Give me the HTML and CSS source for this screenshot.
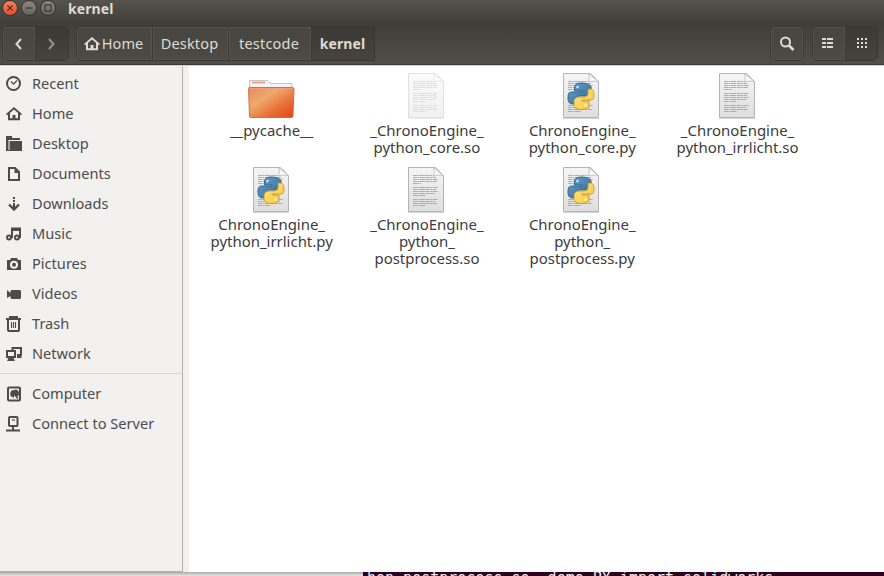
FILE: index.html
```html
<!DOCTYPE html>
<html lang="en">
<head>
<meta charset="utf-8">
<title>kernel</title>
<link rel="stylesheet" href="styles.css">
</head>
<body>
<svg class="defs" aria-hidden="true">
  <defs>
    <linearGradient id="folder" x1="0" y1="0" x2="1" y2="1"><stop offset="0" stop-color="#e58a58"/><stop offset=".35" stop-color="#efaa6c"/><stop offset=".65" stop-color="#e8743b"/><stop offset="1" stop-color="#e2430f"/></linearGradient>
    <linearGradient id="paper" x1="0" y1="0" x2="0" y2="1"><stop offset="0" stop-color="#f5f5f5"/><stop offset="1" stop-color="#dedede"/></linearGradient>
    <linearGradient id="blue" x1="0" y1="0" x2="1" y2="1"><stop offset="0" stop-color="#6ba3cf"/><stop offset="1" stop-color="#2f6795"/></linearGradient>
    <linearGradient id="yellow" x1="0" y1="0" x2="1" y2="1"><stop offset="0" stop-color="#ffe477"/><stop offset="1" stop-color="#f5c947"/></linearGradient>
  </defs>
  <symbol id="home" viewBox="0 0 16 16"><path d="M0 8 8 1l8 7-1.2 1.2L8 3.6 1.2 9.2z" fill="currentColor" stroke="none"/><path d="M3 7v6.2h10V7" fill="none" stroke="currentColor" stroke-width="2"/><path d="M6.500 9h3v5h-3z" fill="currentColor" stroke="none"/></symbol>
  <symbol id="doc" viewBox="0 0 48 48">
    <path d="M6.500 1.500h27l8 8v36h-35z" fill="url(#paper)" stroke="#b4b4b4"/>
    <path d="M6 46.500h36" stroke="#bbb" opacity=".6"/>
    <path d="M11 9.500h20M11 11.500h23M11 13.500h25M11 15.500h24M11 17.500h8M11 21.500h25M11 23.500h23M11 25.500h25M11 27.500h22M11 29.500h13M11 33.500h25M11 35.500h22M11 37.500h24M11 39.500h13" stroke="#a6a6a6" stroke-width=".9" stroke-dasharray="4 .5 2 .5 5 .6"/>
    <path d="M31.500 1.500c1 3 1 5 0 8.500 4-1 7-1 10-.5z" fill="#fafafa" stroke="#b5b5b5" stroke-width=".8"/>
  </symbol>
  <symbol id="python" viewBox="0 0 48 48">
    <use href="#doc"/>
    <path d="M24 11c-5 0-6.500 2-6.500 5v3H25v1H14.500C11.500 20 11 23 11 26c0 4 1.500 6 4.500 6H18v-3c0-3 2-5 5-5h6c3 0 5-2 5-4v-4c0-3-3-5-10-5z" fill="url(#blue)" stroke="#2c5f87" stroke-width=".9"/>
    <path d="M25 37.500c6 0 8-2 8-5V29h-7v-1h9c3 0 3-3 3-5 0-4-1-6-4-6h-2v4c0 3-2 4-5 4h-4c-3 0-5 2-5 4v4c0 3 3 4.500 7 4.500z" transform="translate(-1)" fill="url(#yellow)" stroke="#c99524" stroke-width=".9"/>
    <circle cx="20.500" cy="15" r="1.200" fill="#dceaf5"/><circle cx="28.500" cy="33.500" r="1.200" fill="#fff6cf"/>
  </symbol>
</svg>
<div class="window">
  <header class="titlebar">
    <span class="control close"><svg viewBox="0 0 16 16"><path d="m5 5 6 6m0-6-6 6"/></svg></span>
    <span class="control"><svg viewBox="0 0 16 16"><path d="M4 8h8"/></svg></span>
    <span class="control"><svg viewBox="0 0 16 16"><path d="M4.500 4.500h7v7h-7z"/></svg></span>
    <h1 class="title">kernel</h1>
  </header>
  <nav class="toolbar">
    <div class="group history">
      <button class="button"><svg viewBox="0 0 16 16"><path d="m10 3-4.500 5 4.500 5"/></svg></button>
      <button class="button pressed muted"><svg viewBox="0 0 16 16"><path d="m5 3 4.500 5L5 13"/></svg></button>
    </div>
    <div class="group path">
      <button class="button crumb-home"><svg><use href="#home"/></svg><span>Home</span></button>
      <button class="button crumb-desktop">Desktop</button>
      <button class="button crumb-testcode">testcode</button>
      <button class="button pressed current">kernel</button>
    </div>
    <div class="group search"><button class="button"><svg viewBox="0 0 16 16"><circle cx="6.500" cy="6" r="4.500"/><path d="m10 9.500 4.500 4.500" stroke-width="2.500"/></svg></button></div>
    <div class="group views">
      <button class="button"><svg class="solid" viewBox="0 0 16 16"><path d="M1 2h4v2H1zm5 0h6v2H6zM1 6h4v2H1zm5 0h6v2H6zM1 10h4v2H1zm5 0h6v2H6z"/></svg></button>
      <button class="button pressed"><svg class="solid" viewBox="0 0 16 16"><path d="M4 2h2v2H4zm4 0h2v2H8zm4 0h2v2h-2zM4 6h2v2H4zm4 0h2v2H8zm4 0h2v2h-2zM4 10h2v2H4zm4 0h2v2H8zm4 0h2v2h-2z"/></svg></button>
    </div>
  </nav>
  <div class="content">
    <aside class="sidebar">
      <ul class="places">
        <li><svg viewBox="0 0 16 16"><circle cx="7.500" cy="7.500" r="6.500"/><path d="m5 5.500 2.500 2.500L11 4.500" stroke-width="1.300"/></svg>Recent</li>
        <li><svg><use href="#home"/></svg>Home</li>
        <li><svg class="solid" viewBox="0 0 16 16"><path d="M0 0h6v2h8v2H2.500v10H0zM3.500 5H16v10H0v-1h3.500z"/></svg>Desktop</li>
        <li><svg viewBox="0 0 16 16"><path d="M3 2h6l4 4v8H3z"/><path d="M8.500 2v5H13z" fill="currentColor" stroke="none"/></svg>Documents</li>
        <li><svg viewBox="0 0 16 16"><path d="M8 1v8" stroke-dasharray="2 1"/><path d="m3 8.500 5 5 5-5M8 9v4" stroke-width="2.300"/></svg>Downloads</li>
        <li><svg viewBox="0 0 16 16"><circle cx="3" cy="11.500" r="2"/><circle cx="11" cy="11.500" r="2"/><path d="M6 12V2.500h8V12M6 4h8"/></svg>Music</li>
        <li><svg class="solid" viewBox="0 0 16 16"><path fill-rule="evenodd" d="M1 4h3l1-2h6l1 2h3v10H1zm7 .7a4 4 0 1 0 0 8 4 4 0 0 0 0-8zm0 2a2 2 0 1 1 0 4 2 2 0 0 1 0-4z"/></svg>Pictures</li>
        <li><svg class="solid" viewBox="0 0 16 16"><path d="m1 4 3.500 3V5l1-1H14l1 1v7l-1 1H5.500l-1-1v-2L1 12z"/></svg>Videos</li>
        <li><svg viewBox="0 0 16 16"><path d="M0 3h15M4 2V1h7v1M2 4v10q0 1 1 1h9q1 0 1-1V4"/><path d="M5.500 6v6m2-6v6m2-6v6" stroke-width="1.100"/></svg>Trash</li>
        <li><svg viewBox="0 0 16 16"><path d="M1 5h8v6H1zM6.500 4V2H15v7h-4"/><path d="M3 11h4l2 4H1zm8-3h3l2 4h-5z" fill="currentColor" stroke="none"/></svg>Network</li>
      </ul>
      <ul class="places devices">
        <li><svg viewBox="0 0 16 16"><rect x="2" y="1.500" width="12" height="13" rx="1"/><path d="M8 4a3.500 3.500 0 1 0 0 7.500V9l3 1.500A3.500 3.500 0 0 0 8 4z" fill="currentColor" stroke="none"/><path d="m8.500 8.500 3.500 4" stroke-width="1.500"/></svg>Computer</li>
        <li><svg viewBox="0 0 16 16"><rect x="3" y="1" width="8.500" height="9" rx="1"/><path d="M7 10v4M0 14.500h14"/><path d="M6 4h3" stroke-width="1.200"/></svg>Connect to Server</li>
      </ul>
    </aside>
    <main class="files">
      <figure class="file"><svg class="icon" viewBox="0 0 48 48"><path d="M2.500 16V8.500h18l3 3h21.500V18h-42z" fill="#f5f3f1" stroke="#c8c3be"/><path d="M5 10.500h13" stroke="#e69a81" stroke-width="1.700"/><path d="M1.500 16.500q0-1 1-1h43q1.500 0 1.500 1.500l-1 27q0 1.500-1.500 1.500h-41q-1 0-1-1.500z" fill="url(#folder)" stroke="#d0673c" stroke-width=".9"/><path d="M2.500 16.500h43" stroke="#f0a080"/></svg><figcaption>__pycache__</figcaption></figure>
      <figure class="file fading"><svg class="icon"><use href="#doc"/></svg><figcaption>_ChronoEngine_<br>python_core.so</figcaption></figure>
      <figure class="file"><svg class="icon"><use href="#python"/></svg><figcaption>ChronoEngine_<br>python_core.py</figcaption></figure>
      <figure class="file"><svg class="icon"><use href="#doc"/></svg><figcaption>_ChronoEngine_<br>python_irrlicht.so</figcaption></figure>
      <figure class="file"><svg class="icon"><use href="#python"/></svg><figcaption>ChronoEngine_<br>python_irrlicht.py</figcaption></figure>
      <figure class="file"><svg class="icon"><use href="#doc"/></svg><figcaption>_ChronoEngine_<br>python_<br>postprocess.so</figcaption></figure>
      <figure class="file"><svg class="icon"><use href="#python"/></svg><figcaption>ChronoEngine_<br>python_<br>postprocess.py</figcaption></figure>
    </main>
  </div>
</div>
<footer class="backdrop"><div class="terminal">hon_postprocess.so&nbsp; demo_PY_import_solidworks</div></footer>
</body>
</html>
```
FILE: styles.css
```css
* { box-sizing: border-box; }
body {
  margin: 0;
  width: 884px;
  height: 576px;
  overflow: hidden;
  background: #fff;
  color: #3c3c3c;
  font: 14px/17px "Noto Sans", sans-serif;
}
.defs { position: absolute; width: 0; height: 0; }
.window { height: 572px; display: flex; flex-direction: column; }
svg { fill: none; stroke: currentColor; stroke-width: 2; flex: none; }
svg.solid { fill: currentColor; stroke: none; }
.titlebar {
  height: 24px;
  flex: none;
  display: flex;
  align-items: flex-start;
  gap: 3px;
  padding-left: 2px;
  background: linear-gradient(#56534c, #403e39);
}
.control {
  width: 16px;
  height: 16px;
  border: 1px solid #35332f;
  border-radius: 50%;
  background: linear-gradient(#8b8881, #66635c);
  color: #3b3934;
}
.control svg { display: block; width: 14px; height: 14px; stroke-width: 1.3; }
.control.close { background: linear-gradient(#f48260, #e6502b); color: #5b2011; }
.title { margin: 0 0 0 9px; font-size: 14px; line-height: 17px; color: #dfdbd2; letter-spacing: .1px; }
.toolbar {
  height: 41px;
  flex: none;
  display: flex;
  padding: 2px 6px 4px 2px;
  background: linear-gradient(#403e39, #514e48);
  border-bottom: 1px solid #3b3935;
  color: #dfdbd2;
}
.group {
  display: flex;
  height: 35px;
  border: 1px solid #393733;
  border-radius: 5px;
  overflow: hidden;
}
.history { width: 67px; }
.path { margin-left: 7px; width: 299px; border-radius: 5px 0 0 5px; }
.search { width: 34px; margin-left: auto; }
.views { width: 66px; margin-left: 8px; }
.button {
  flex: 1;
  display: flex;
  align-items: center;
  justify-content: center;
  padding: 0;
  border: 0;
  background: linear-gradient(#474540, #4d4a44);
  color: inherit;
  font: inherit;
  font-size: 14.5px;
  box-shadow: inset 0 0 0 1px #56534d;
}
.button + .button { border-left: 1px solid #393733; }
.button.pressed { background: linear-gradient(#3b3934, #47443f); box-shadow: none; }
.muted { color: #969289; }
.button svg { width: 16px; height: 16px; }
.path .button { flex: none; }
.crumb-home { width: 75px; gap: 2px; padding-right: 2px; }
.crumb-desktop { width: 76px; padding-right: 2px; letter-spacing: .15px; }
.crumb-testcode { width: 83px; padding-right: 2px; letter-spacing: .2px; }
.path .current { flex: 1; font-size: 14px; font-weight: 700; letter-spacing: .1px; padding-right: 1px; }
.content { flex: 1; display: flex; border-top: 1px solid #d2d0ce; }
.sidebar {
  width: 183px;
  padding-top: 2px;
  background: #f2f1f0;
  border-right: 1px solid #b4b1ae;
  border-bottom: 1px solid #b4b1ae;
}
.places { margin: 0; padding: 0; list-style: none; color: #4c4c4c; font-size: 14.6px; }
.places li { height: 30px; display: flex; align-items: center; gap: 10px; padding-left: 6px; }
.places svg { width: 16px; height: 16px; margin-top: 1px; }
.devices { margin-top: 5px; padding-top: 4px; border-top: 1px solid #d9d7d5; }
.files {
  flex: 1;
  display: grid;
  grid-template-columns: repeat(4, 155.3px);
  grid-auto-rows: 94px;
  padding: 6px 0 0 4px;
  border-left: 6px solid #f2f1f0;
}
.file { margin: 0; display: flex; flex-direction: column; align-items: center; gap: 2px; text-align: center; font-size: 14.95px; }
.file figcaption { padding-left: 2px; }
.icon { width: 48px; height: 48px; stroke: none; stroke-width: 1; }
.fading .icon { opacity: .4; }
.backdrop { height: 4px; display: flex; justify-content: flex-end; background: linear-gradient(#aaa, #e8e8e8); overflow: hidden; }
.terminal {
  width: 521px;
  height: 18px;
  padding-left: 3px;
  background: #2c001e;
  border-left: 1px solid #10001a;
  color: #eee;
  font: 15px/12px "DejaVu Sans Mono", monospace;
  white-space: nowrap;
}
```
